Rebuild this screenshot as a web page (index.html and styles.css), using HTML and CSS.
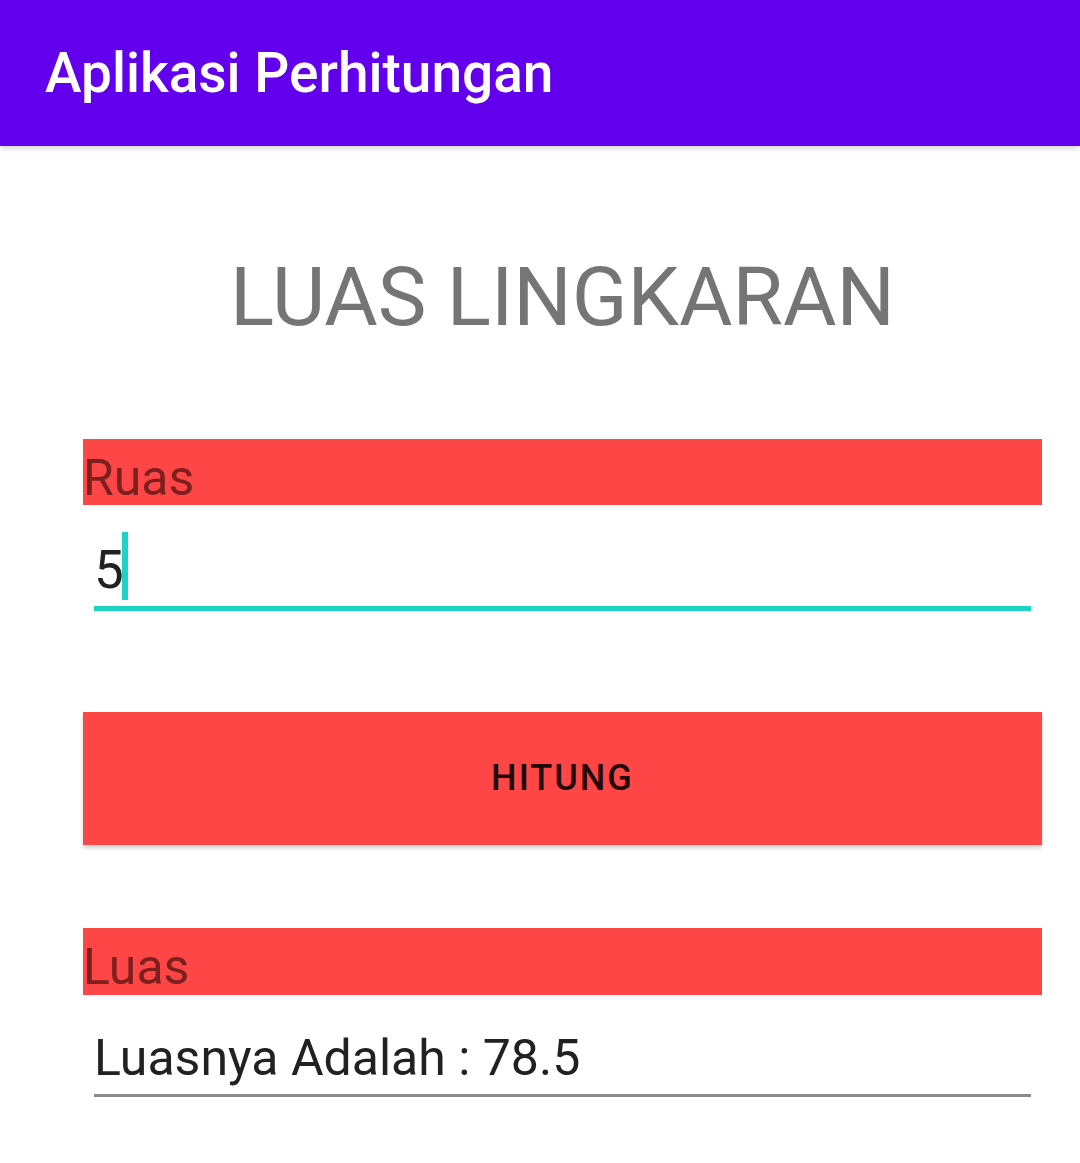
FILE: index.html
```html
<!DOCTYPE html>
<html lang="id">
<head>
<meta charset="utf-8">
<title>Aplikasi Perhitungan</title>
<link rel="stylesheet" href="styles.css">
</head>
<body>
<header class="appbar">
  <h1 class="appbar-title">Aplikasi Perhitungan</h1>
</header>
<main class="content">
  <h2 class="heading">LUAS LINGKARAN</h2>
  <div class="label label-ruas">Ruas</div>
  <div class="edit edit-active"><span class="edit-text">5</span><span class="cursor"></span></div>
  <button class="btn" type="button">HITUNG</button>
  <div class="label label-luas">Luas</div>
  <div class="edit edit-result"><span class="edit-text">Luasnya Adalah : 78.5</span></div>
</main>
</body>
</html>
```

FILE: styles.css
```css
* { box-sizing: border-box; }

html, body {
  margin: 0;
  padding: 0;
  background: #ffffff;
  font-family: Roboto, "Noto Sans", "Liberation Sans", sans-serif;
}

.appbar {
  height: 146px;
  background: #6200ee;
  padding-left: 45px;
  box-shadow: 0 2px 6px rgba(0, 0, 0, 0.18);
  position: relative;
  z-index: 1;
}

.appbar-title {
  margin: 0;
  font-size: 55px;
  font-weight: 500;
  line-height: 146px;
  color: #ffffff;
  letter-spacing: 0;
}

.content {
  display: flex;
  flex-direction: column;
  padding: 0 38px 0 83px;
}

.heading {
  margin: 102px 0 0 0;
  font-size: 82px;
  font-weight: 400;
  line-height: 98px;
  color: #757575;
  text-align: center;
}

.label {
  height: 66px;
  padding-top: 12px;
  background: #ff4646;
  color: #7b1f1f;
  font-size: 50px;
  line-height: 54px;
}

.label-ruas { margin-top: 93px; }
.label-luas { margin-top: 83px; height: 67px; }

.edit {
  margin: 0 11px;
  color: #212121;
}

.edit-active {
  margin-top: 27px;
  font-size: 53px;
  line-height: 68px;
  padding-bottom: 2px;
  border-bottom: 5px solid #1ed3c3;
}

.cursor {
  display: inline-block;
  width: 6px;
  height: 68px;
  margin-left: -2px;
  background: #1ed3c3;
  vertical-align: -12px;
}

.edit-result {
  margin-top: 33px;
  font-size: 50px;
  line-height: 60px;
  padding-bottom: 6px;
  border-bottom: 3px solid #8a8a8a;
}

.btn {
  margin-top: 101px;
  height: 133px;
  border: 0;
  background: #ff4646;
  color: #210909;
  font-family: Roboto, "Noto Sans", "Liberation Sans", sans-serif;
  font-size: 36px;
  font-weight: 500;
  letter-spacing: 2px;
  box-shadow: 0 3px 4px rgba(0, 0, 0, 0.18);
  display: flex;
  align-items: center;
  justify-content: center;
  padding: 0 0 2px 0;
}
```
